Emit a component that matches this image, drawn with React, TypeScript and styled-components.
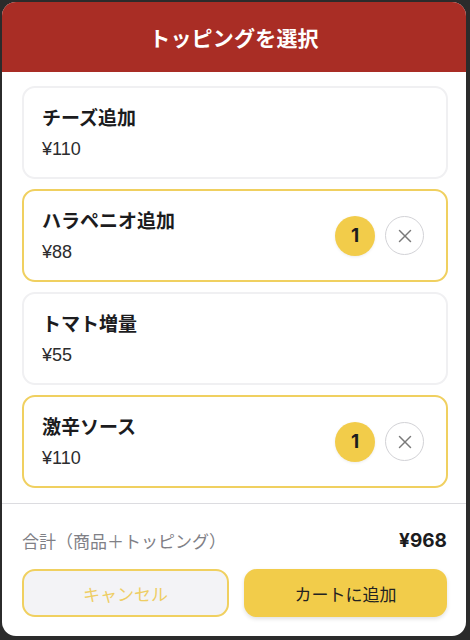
import styled, { createGlobalStyle } from "styled-components";

const GlobalStyle = createGlobalStyle`
    html, body {
        margin: 0;
        padding: 0;
        background-color: #2b2b2b;
    }
    * {
        box-sizing: border-box;
    }
    body {
        font-family: 'Inter', 'Noto Sans CJK JP', sans-serif;
    }
`

interface Topping {
    name: string;
    price: number;
    count: number;
}

const toppings: Topping[] = [
    {name: "チーズ追加", price: 110, count: 0},
    {name: "ハラペニオ追加", price: 88, count: 1},
    {name: "トマト増量", price: 55, count: 0},
    {name: "激辛ソース", price: 110, count: 1},
];

function CloseIcon(){
    return(
        <svg width="16" height="16" viewBox="0 0 16 16">
            <line x1="2.5" y1="2.5" x2="13.5" y2="13.5" stroke="#7a7a7a" strokeWidth="1.5" strokeLinecap="round"/>
            <line x1="13.5" y1="2.5" x2="2.5" y2="13.5" stroke="#7a7a7a" strokeWidth="1.5" strokeLinecap="round"/>
        </svg>
    )
}

function App(){
    return(
        <>
            <GlobalStyle/>
            <Overlay>
                <Modal>
                    <Header>
                        <HeaderTitle>トッピングを選択</HeaderTitle>
                    </Header>
                    <List>
                        {toppings.map((t)=>(
                            <Card key={t.name} $selected={t.count > 0}>
                                <CardInfo>
                                    <CardTitle>{t.name}</CardTitle>
                                    <CardPrice>¥{t.price}</CardPrice>
                                </CardInfo>
                                {t.count > 0 && (
                                    <CardControls>
                                        <CountBadge>{t.count}</CountBadge>
                                        <RemoveButton aria-label="削除"><CloseIcon/></RemoveButton>
                                    </CardControls>
                                )}
                            </Card>
                        ))}
                    </List>
                    <Footer>
                        <TotalRow>
                            <TotalLabel>合計（商品＋トッピング）</TotalLabel>
                            <TotalValue>¥968</TotalValue>
                        </TotalRow>
                        <ButtonRow>
                            <CancelButton>キャンセル</CancelButton>
                            <AddButton>カートに追加</AddButton>
                        </ButtonRow>
                    </Footer>
                </Modal>
            </Overlay>
        </>
    )
}

const Overlay = styled.div`
    width: 470px;
    height: 640px;
    padding: 2px 4px 4px 2px;
`

const Modal = styled.div`
    height: 634px;
    background-color: white;
    border-radius: 14px;
    overflow: hidden;
    display: flex;
    flex-direction: column;
`

const Header = styled.div`
    height: 70px;
    flex-shrink: 0;
    background-color: #a92d25;
    display: flex;
    align-items: center;
    justify-content: center;
`

const HeaderTitle = styled.h1`
    margin: 0;
    color: white;
    font-size: 21px;
    font-weight: 700;
    letter-spacing: 0.2px;
`

const List = styled.div`
    flex: 1;
    padding: 14px 18px 0px 20px;
    display: flex;
    flex-direction: column;
    gap: 10px;
    overflow: hidden;
`

const Card = styled.div<{ $selected: boolean }>`
    flex-shrink: 0;
    border: 2px solid ${p => p.$selected ? "#f0d060" : "#f0f0f2"};
    border-radius: 13px;
    padding: 17px 22px 17px 18px;
    display: flex;
    align-items: center;
    justify-content: space-between;
    background-color: white;
`

const CardInfo = styled.div`
    display: flex;
    flex-direction: column;
    gap: 5px;
`

const CardTitle = styled.div`
    font-size: 19px;
    line-height: 28px;
    font-weight: 700;
    color: #1c1c1e;
`

const CardPrice = styled.div`
    font-family: 'Liberation Sans', 'Noto Sans CJK JP', sans-serif;
    font-size: 18px;
    line-height: 22px;
    color: #2c2c2e;
`

const CardControls = styled.div`
    display: flex;
    align-items: center;
    gap: 10px;
`

const CountBadge = styled.div`
    width: 40px;
    height: 40px;
    border-radius: 50%;
    background-color: #f2cc4a;
    display: flex;
    align-items: center;
    justify-content: center;
    font-size: 19px;
    font-weight: 700;
    color: #1c1c1e;
    box-shadow: 0 1px 3px rgba(0, 0, 0, 0.08);
`

const RemoveButton = styled.button`
    width: 39px;
    height: 39px;
    border-radius: 50%;
    border: 1px solid #d2d2d6;
    background-color: white;
    display: flex;
    align-items: center;
    justify-content: center;
    padding: 0;
`

const Footer = styled.div`
    flex-shrink: 0;
    border-top: 1px solid #dcdce0;
    padding: 22px 19px 19px 20px;
`

const TotalRow = styled.div`
    height: 28px;
    display: flex;
    align-items: center;
    justify-content: space-between;
`

const TotalLabel = styled.span`
    font-size: 17px;
    color: #808086;
`

const TotalValue = styled.span`
    font-size: 19px;
    font-weight: 700;
    color: #1c1c1e;
`

const ButtonRow = styled.div`
    margin-top: 15px;
    display: grid;
    grid-template-columns: 207px 1fr;
    gap: 15px;
`

const CancelButton = styled.button`
    height: 48px;
    border-radius: 13px;
    border: 2px solid #f0d060;
    background-color: #f3f3f6;
    color: #eecd63;
    font-family: inherit;
    font-size: 17px;
`

const AddButton = styled.button`
    height: 48px;
    border-radius: 13px;
    border: none;
    background-color: #f2cc4a;
    color: #222;
    font-family: inherit;
    font-size: 17px;
    box-shadow: 0 2px 4px rgba(0, 0, 0, 0.12);
`

export default App;
